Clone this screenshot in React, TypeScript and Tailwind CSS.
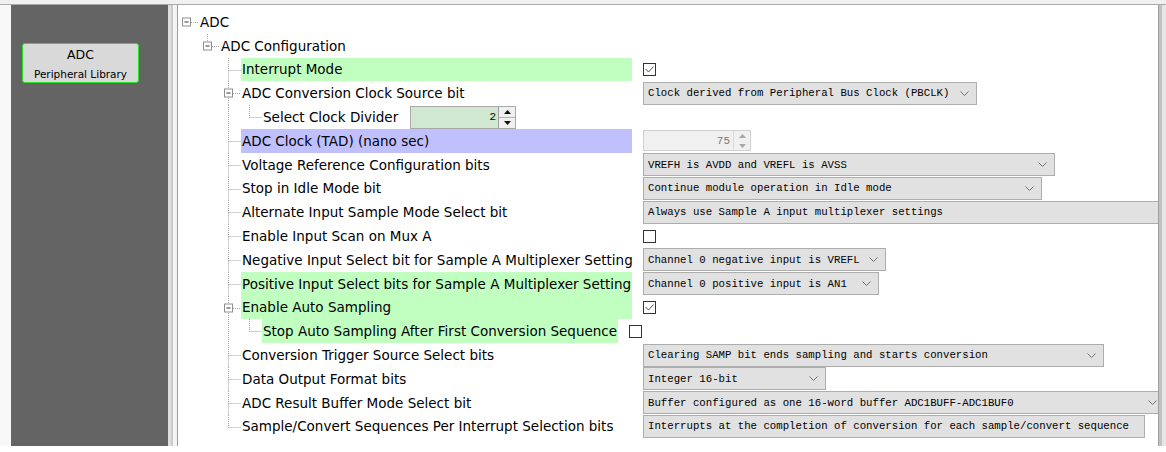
import React from "react";

type Value =
  | { t: "check"; on: boolean }
  | { t: "combo"; text: string; w: string; arrow?: boolean }
  | { t: "divider" }
  | { t: "tad" };

type Row = {
  label: string;
  level: number;
  box?: boolean;
  hl?: "green" | "blue";
  value?: Value;
};

const rows: Row[] = [
  { label: "ADC", level: 0, box: true },
  { label: "ADC Configuration", level: 1, box: true },
  { label: "Interrupt Mode", level: 2, hl: "green", value: { t: "check", on: true } },
  {
    label: "ADC Conversion Clock Source bit",
    level: 2,
    box: true,
    value: { t: "combo", text: "Clock derived from Peripheral Bus Clock (PBCLK)", w: "w-[334px]" },
  },
  { label: "Select Clock Divider", level: 3, value: { t: "divider" } },
  { label: "ADC Clock (TAD) (nano sec)", level: 2, hl: "blue", value: { t: "tad" } },
  {
    label: "Voltage Reference Configuration bits",
    level: 2,
    value: { t: "combo", text: "VREFH is AVDD and VREFL is AVSS", w: "w-[412px]" },
  },
  {
    label: "Stop in Idle Mode bit",
    level: 2,
    value: { t: "combo", text: "Continue module operation in Idle mode", w: "w-[399px]" },
  },
  {
    label: "Alternate Input Sample Mode Select bit",
    level: 2,
    value: { t: "combo", text: "Always use Sample A input multiplexer settings", w: "w-[540px]" },
  },
  { label: "Enable Input Scan on Mux A", level: 2, value: { t: "check", on: false } },
  {
    label: "Negative Input Select bit for Sample A Multiplexer Setting",
    level: 2,
    value: { t: "combo", text: "Channel 0 negative input is VREFL", w: "w-[243px]" },
  },
  {
    label: "Positive Input Select bits for Sample A Multiplexer Setting",
    level: 2,
    hl: "green",
    value: { t: "combo", text: "Channel 0 positive input is AN1", w: "w-[236px]" },
  },
  { label: "Enable Auto Sampling", level: 2, box: true, hl: "green", value: { t: "check", on: true } },
  {
    label: "Stop Auto Sampling After First Conversion Sequence",
    level: 3,
    hl: "green",
    value: { t: "check", on: false },
  },
  {
    label: "Conversion Trigger Source Select bits",
    level: 2,
    value: { t: "combo", text: "Clearing SAMP bit ends sampling and starts conversion", w: "w-[461px]" },
  },
  {
    label: "Data Output Format bits",
    level: 2,
    value: { t: "combo", text: "Integer 16-bit", w: "w-[183px]" },
  },
  {
    label: "ADC Result Buffer Mode Select bit",
    level: 2,
    value: { t: "combo", text: "Buffer configured as one 16-word buffer ADC1BUFF-ADC1BUF0", w: "w-[522px]" },
  },
  {
    label: "Sample/Convert Sequences Per Interrupt Selection bits",
    level: 2,
    value: {
      t: "combo",
      text: "Interrupts at the completion of conversion for each sample/convert sequence",
      w: "w-[502px]",
      arrow: false,
    },
  },
];

const H = 23.8;
const C = H / 2;
const LINE = "#a3a3a3";

// does the node at level k (current or ancestor) have a sibling further down?
function hasLater(i: number, k: number) {
  for (let j = i + 1; j < rows.length; j++) {
    if (rows[j].level < k) return false;
    if (rows[j].level === k) return true;
  }
  return false;
}

function TreeCell({ own, pass, top, bottom, box }: { own: boolean; pass: boolean; top: boolean; bottom: boolean; box?: boolean }) {
  const dash = { stroke: LINE, strokeWidth: 1, strokeDasharray: "1 1", fill: "none" };
  const cy = Math.round(C) + 0.5;
  return (
    <svg width={21} height={H} className="block shrink-0">
      {!own && pass && <line x1={8.5} y1={0} x2={8.5} y2={H} {...dash} />}
      {own && top && <line x1={8.5} y1={0} x2={8.5} y2={box ? cy - 4.5 : cy} {...dash} />}
      {own && bottom && <line x1={8.5} y1={box ? cy + 4.5 : cy} x2={8.5} y2={H} {...dash} />}
      {own && !box && <line x1={8.5} y1={cy} x2={21} y2={cy} {...dash} />}
      {own && box && (
        <>
          <line x1={13} y1={cy} x2={21} y2={cy} {...dash} />
          <rect x={4.5} y={cy - 4.5} width={8} height={8} fill="white" stroke="#8f8f8f" />
          <line x1={6.5} y1={cy - 0.5} x2={10.5} y2={cy - 0.5} stroke="#333" />
        </>
      )}
    </svg>
  );
}

function Chevron({ color = "#707070" }: { color?: string }) {
  return (
    <svg width={9} height={5} className="block shrink-0">
      <polyline points="0.5,0.5 4.5,4.5 8.5,0.5" fill="none" stroke={color} strokeWidth={1} />
    </svg>
  );
}

function Checkbox({ on }: { on: boolean }) {
  return (
    <div className="h-[13px] w-[13px] shrink-0 border border-[#333333] bg-white">
      {on && (
        <svg width={11} height={11} className="block">
          <polyline points="1.5,5 4.5,8 9.5,2.5" fill="none" stroke="#555" strokeWidth={1} />
        </svg>
      )}
    </div>
  );
}

function Combo({ text, w, arrow = true }: { text: string; w: string; arrow?: boolean }) {
  return (
    <div
      className={`${w} flex h-[23px] shrink-0 items-center justify-between overflow-hidden border border-[#adadad] bg-[#e1e1e1] pl-[4px] pr-[7px]`}
    >
      <span className="whitespace-nowrap font-['Liberation_Mono',monospace] text-[10.7px] text-black">{text}</span>
      {arrow && <Chevron />}
    </div>
  );
}

function SpinButtons({ color, border }: { color: string; border: string }) {
  return (
    <div className={`flex h-full w-[17px] shrink-0 flex-col border-l ${border}`}>
      <div className="flex flex-1 items-center justify-center">
        <svg width={7} height={4}>
          <polygon points="3.5,0 7,4 0,4" fill={color} />
        </svg>
      </div>
      <div className="flex flex-1 items-center justify-center">
        <svg width={7} height={4}>
          <polygon points="0,0 7,0 3.5,4" fill={color} />
        </svg>
      </div>
    </div>
  );
}

function Divider() {
  return (
    <div className="flex h-[23px] w-[106px] shrink-0 items-stretch border border-[#a9a9a9] bg-[#cfe8cf]">
      <div className="flex flex-1 items-center justify-end pr-[2px] font-['Liberation_Mono',monospace] text-[11px] text-black">
        2
      </div>
      <div className="flex w-[17px] flex-col border-l border-[#a0a0a0] bg-[#f0f0f0]">
        <div className="flex flex-1 items-center justify-center border-b border-[#b0b0b0]">
          <svg width={7} height={4}>
            <polygon points="3.5,0 7,4 0,4" fill="#111" />
          </svg>
        </div>
        <div className="flex flex-1 items-center justify-center">
          <svg width={7} height={4}>
            <polygon points="0,0 7,0 3.5,4" fill="#111" />
          </svg>
        </div>
      </div>
    </div>
  );
}

function Tad() {
  return (
    <div className="flex h-[21px] w-[108px] shrink-0 items-stretch border border-[#d0d0d0] bg-[#f0f0f0]">
      <div className="flex flex-1 items-center justify-end pr-[3px] font-['Liberation_Mono',monospace] text-[11px] text-[#777777]">
        75
      </div>
      <SpinButtons color="#a8a8a8" border="border-[#dadada]" />
    </div>
  );
}

function ValueCell({ v }: { v: Value }) {
  if (v.t === "check") return <Checkbox on={v.on} />;
  if (v.t === "combo") return <Combo text={v.text} w={v.w} arrow={v.arrow} />;
  if (v.t === "divider") return <Divider />;
  return <Tad />;
}

function TreeRow({ row, i }: { row: Row; i: number }) {
  const L = row.level;
  const cells = [];
  for (let k = 0; k <= L; k++) {
    const own = k === L;
    cells.push(
      <TreeCell
        key={k}
        own={own}
        pass={!own && k > 0 && hasLater(i, k)}
        top={own && L > 0}
        bottom={own && hasLater(i, L)}
        box={own && row.box}
      />
    );
  }
  const hl = row.hl === "green" ? "bg-[#c0ffc0]" : row.hl === "blue" ? "bg-[#c0c0ff]" : "";
  return (
    <div className="flex h-[23.8px] items-center">
      {cells}
      <div
        className={`flex h-full items-center whitespace-nowrap pl-[1px] ${L === 2 ? "w-[391px] shrink-0" : "pr-[1px]"} ${hl}`}
      >
        {row.label}
      </div>
      {row.value && (
        <div className="ml-[11px] flex items-center">
          <ValueCell v={row.value} />
        </div>
      )}
    </div>
  );
}

export default function App() {
  return (
    <div className="flex h-[452px] w-[1166px] flex-col overflow-hidden bg-white font-['DejaVu_Sans',sans-serif] text-[13.5px] text-black">
      <div className="h-[5px] shrink-0 border-b border-[#aaaaaa] bg-[#f0f0f0]" />
      <div className="flex h-[441px] shrink-0">
        <div className="w-[11px] shrink-0 bg-[#f8f8f8]" />
        <div className="w-[157px] shrink-0 bg-[#646464] pl-[11px] pt-[38px]">
          <div className="flex h-[40px] w-[117px] flex-col items-center rounded-[3px] border border-[#2ee02e] bg-[#d9d9d9] pt-[3px]">
            <div className="text-[12.5px] leading-[16px]">ADC</div>
            <div className="mt-[4px] text-[10.5px] leading-[14px]">Peripheral Library</div>
          </div>
        </div>
        <div className="w-[3px] shrink-0 bg-[#dedede]" />
        <div className="w-[2px] shrink-0 bg-[#cacaca]" />
        <div className="w-[4px] shrink-0 bg-[#f4f4f4]" />
        <div className="w-[981px] shrink-0 overflow-hidden border-l border-[#9c9c9c] bg-white pt-[5px]">
          {rows.map((r, i) => (
            <TreeRow key={i} row={r} i={i} />
          ))}
        </div>
        <div className="w-[1px] shrink-0 bg-[#a0a0a0]" />
        <div className="w-[3px] shrink-0 bg-[#c2c2c2]" />
        <div className="w-[4px] shrink-0 bg-[#e6e6e6]" />
      </div>
      <div className="flex-1 bg-white" />
    </div>
  );
}
